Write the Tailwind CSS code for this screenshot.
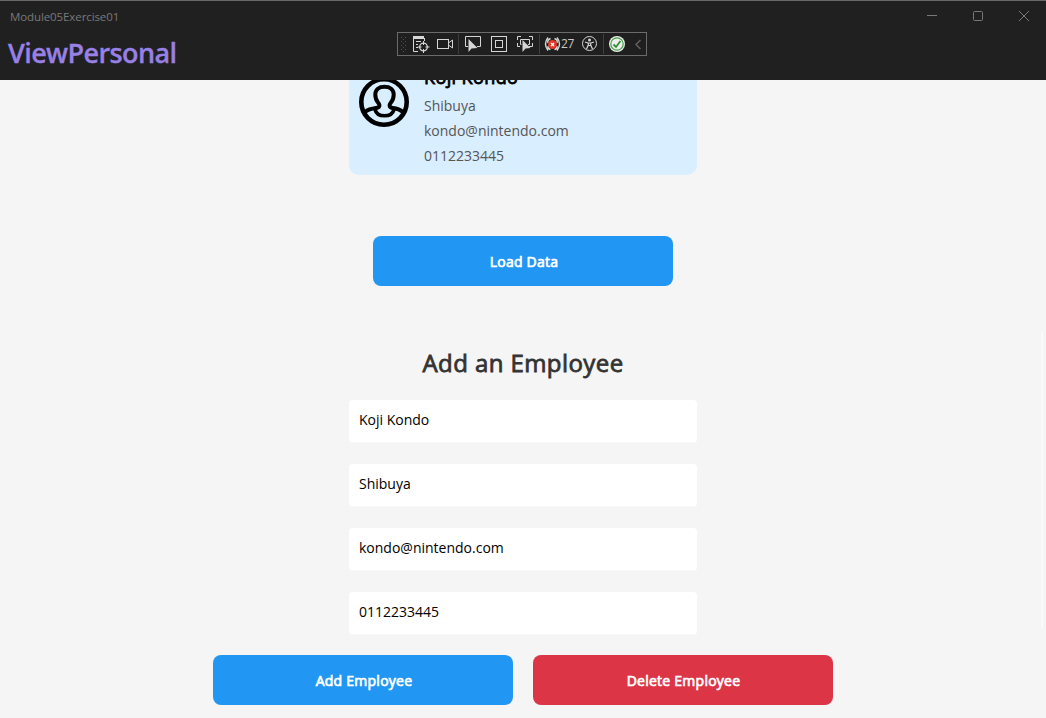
<!DOCTYPE html>
<html lang="en">
<head>
<meta charset="utf-8">
<title>Module05Exercise01</title>
<script src="https://cdn.jsdelivr.net/npm/@tailwindcss/browser@4"></script>
</head>
<body class="relative flex h-screen w-screen flex-col overflow-hidden bg-[#f5f5f5] font-['Open_Sans',sans-serif] text-sm">
<header class="z-10 flex h-20 shrink-0 flex-col border-t border-[#686868] bg-[#202020]">
  <div class="flex h-8 items-center justify-between pl-[10px]">
    <span class="text-[11.5px] tracking-[-0.1px] text-[#797979]">Module05Exercise01</span>
    <div class="flex h-[30px] items-center self-start text-[#787878]">
      <span class="flex w-[46px] justify-center"><svg width="10" height="10" fill="none" stroke="currentColor"><path d="M0 4.5H10"/></svg></span>
      <span class="flex w-[46px] justify-center"><svg width="10" height="10" fill="none" stroke="currentColor"><rect x=".5" y=".5" width="9" height="9" rx="1"/></svg></span>
      <span class="flex w-[45px] justify-center"><svg width="10" height="10" fill="none" stroke="currentColor"><path d="M0 0L10 10M10 0L0 10"/></svg></span>
    </div>
  </div>
  <h1 class="pl-2 text-[27px] leading-10 font-semibold tracking-[-0.6px] text-[#9880e5] [-webkit-text-stroke:0.3px_#9880e5]">ViewPersonal</h1>
</header>

<div class="absolute top-8 left-[397px] z-20 h-6 w-[250px] border border-[#6b6b6b] bg-[#1f1f1f]">
  <svg class="absolute -top-px -left-px" width="250" height="24" fill="none" stroke="#d6d6d6">
    <path d="M4.5 5V20M8.500 5V20" stroke="#505050" stroke-dasharray="1 3"/><path d="M6.500 7V20" stroke="#505050" stroke-dasharray="1 3"/>
    <path d="M16 5.500H27" stroke-width="3"/><path d="M16.500 5V19.500H21M27.500 6V9M19 9.500H24M19 12.500H21M19 15.500H21"/>
    <circle cx="26.500" cy="15" r="3.800" stroke-width="1.300"/><path d="M26.500 9V13M26.500 17V21M20.500 15H24.500M28.500 15H32.500"/>
    <rect x="40.500" y="7.500" width="11" height="9"/><path d="M51.500 11L55.500 8V16L51.500 13"/>
    <path d="M61.500 2V22M142.500 2V22M206.500 2V22" stroke="#3d3d3d"/>
    <path d="M71 14.500H68.500V4.500H83.500V14.500H80"/><path d="M71.500 7V20L74.500 16.500L80.500 16Z" fill="#d6d6d6" stroke="none"/>
    <rect x="94.500" y="4.500" width="15" height="15"/><rect x="98.500" y="8.500" width="7" height="7"/>
    <path d="M124 4.500H120.500V8M120.500 11V14.500H123M132 4.500H135.500V8M135.500 11V14.500H132M124.500 12.500H123.500V7.500H132.500V12.500H131"/><path d="M125.500 8V20L128.500 16.500L133.500 16Z" fill="#d6d6d6" stroke="none"/>
    <g stroke-width="1.400"><path d="M151 5.500Q146 12 151 18.500M160 5.500Q165 12 160 18.500M153.500 6.500Q150 8 151 11M157.500 6.500Q161 8 160 11M151 14Q150.500 17 153.500 17.500M160 14Q160.500 17 157.500 17.500"/></g>
    <circle cx="155.500" cy="12.500" r="4.500" fill="#e33a28" stroke="none"/><path d="M154 11L157 14M157 11L154 14" stroke="#fff" stroke-width="1.300"/>
    <circle cx="192.500" cy="11.500" r="7"/><circle cx="192.500" cy="8" r="1.500" fill="#d6d6d6" stroke="none"/><path d="M188 10L191 11H194L197 10M191.300 11V13L189.500 17M193.700 11V13L195.500 17M191.300 13.500H193.700" stroke-width="1.200"/>
    <circle cx="220" cy="12" r="8" fill="#eee" stroke="none"/><circle cx="220" cy="12" r="6.200" stroke="#43a047" stroke-width="1.200"/><path d="M216.500 12.500L219 15L223.500 9" stroke="#2e9035" stroke-width="1.800"/>
    <path d="M243.500 8L239 12.500L243.500 17" stroke="#606060" stroke-width="1.500"/>
  </svg>
  <span class="absolute top-[2px] left-[163px] text-xs leading-[18px] tracking-[-0.4px] text-[#c8c8c8]">27</span>
</div>

<main class="flex flex-1 flex-col items-center overflow-hidden">
  <section class="-mt-5 flex h-[115px] w-[348px] shrink-0 gap-[15px] rounded-[10px] bg-[#d9eeff] px-[10px]">
    <svg class="mt-[17px] shrink-0" width="50" height="50" fill="none" stroke="#000" stroke-width="4">
      <circle cx="25" cy="25" r="22.700" stroke-width="4.600"/>
      <path d="M6 35C9 32.500 13 31.500 17 31C20.500 30.500 21.500 28.500 19 25.500C16.800 22.800 16.300 20 16.300 17.500C16.300 12.500 20 9.800 25.500 9.800S34.700 12.500 34.700 17.500C34.700 20 34.200 22.800 32 25.500C29.500 28.500 30.500 30.500 34 31C38 31.500 41 32.500 44 35"/>
      <path d="M16 32.500C17 36.500 20.500 38.800 25.500 38.800S34 36.500 35 32.500" stroke-width="3.600"/>
    </svg>
    <div class="mt-1 flex flex-col leading-[25px] text-[#555]">
      <span class="mb-[2px] text-lg leading-[27px] tracking-[0.4px] text-black [-webkit-text-stroke:0.8px_black]">Koji Kondo</span>
      <span>Shibuya</span><span>kondo@nintendo.com</span><span>0112233445</span>
    </div>
  </section>

  <button class="mt-[61px] h-[50px] w-[300px] shrink-0 rounded-lg bg-[#2296f3] pt-[2px] pl-[2px] tracking-[0.25px] text-white [-webkit-text-stroke:0.7px_white]">Load Data</button>

  <h2 class="mt-[57px] text-2xl leading-10 tracking-[0.42px] text-[#333] [-webkit-text-stroke:0.8px_#333]">Add an Employee</h2>
  <form class="mt-[17px] flex w-[348px] flex-col gap-[21px]">
    <div class="h-[43px] rounded-[4px] border-b border-[#fafafa] bg-white px-[10px] leading-10">Koji Kondo</div>
    <div class="h-[43px] rounded-[4px] border-b border-[#fafafa] bg-white px-[10px] leading-10">Shibuya</div>
    <div class="h-[43px] rounded-[4px] border-b border-[#fafafa] bg-white px-[10px] leading-10">kondo@nintendo.com</div>
    <div class="h-[43px] rounded-[4px] border-b border-[#fafafa] bg-white px-[10px] leading-10">0112233445</div>
  </form>
  <div class="mt-5 flex gap-5 text-white [-webkit-text-stroke:0.7px_white]">
    <button class="h-[50px] w-[300px] rounded-lg bg-[#2296f3] pt-[2px] pl-[2px] tracking-[0.25px]">Add Employee</button>
    <button class="h-[50px] w-[300px] rounded-lg bg-[#dc3546] pt-[2px] pl-px tracking-[0.25px]">Delete Employee</button>
  </div>
</main>
<div class="absolute top-[331px] right-[3px] h-[297px] w-[2px] rounded-full bg-[#fafafa]"></div>
</body>
</html>
